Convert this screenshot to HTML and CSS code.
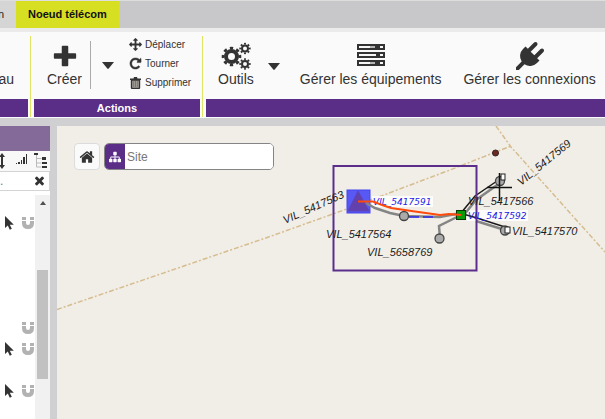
FILE: index.html
```html
<!DOCTYPE html>
<html lang="fr">
<head>
<meta charset="utf-8">
<meta name="viewport" content="width=device-width, initial-scale=1">
<title>Noeud télécom</title>
<link rel="stylesheet" href="styles.css">
</head>
<body>
<svg class="symbols" aria-hidden="true">
  <symbol id="pointer" viewBox="0 0 10 14"><path d="M1 0v12l2.800-2.600 2 4.300 2-1-2-4H9.800z"/></symbol>
  <symbol id="magnet" viewBox="0 0 12 12"><path d="M0 0h4v3H0zM8 0h4v3H8zM0 4h4v2q0 2 2 2t2-2V4h4v2q0 6-6 6T0 6z"/></symbol>
</svg>

<nav class="tabs">
  <button class="tab tab-clipped">n</button>
  <button class="tab tab-active">Noeud télécom</button>
</nav>

<header class="ribbon">
  <section class="group group-first">
    <div class="group-body"><button class="clipped">au</button></div>
    <div class="group-title"></div>
  </section>
  <section class="group group-actions">
    <div class="group-body">
      <button class="tool tool-create">
        <svg class="tool-icon" viewBox="0 0 28 28"><path d="M11.500 3h5a1 1 0 0 1 1 1v7H25a1 1 0 0 1 1 1v4a1 1 0 0 1-1 1h-7.500V24a1 1 0 0 1-1 1h-5a1 1 0 0 1-1-1v-7H3a1 1 0 0 1-1-1v-4a1 1 0 0 1 1-1h7.500V4a1 1 0 0 1 1-1z"/></svg>
        <span>Créer</span>
      </button>
      <button class="caret caret-split" aria-label="Plus"><svg viewBox="0 0 12 7"><path d="M0 0h12L6.700 6.600q-.7.600-1.400 0z"/></svg></button>
      <div class="mini-list">
        <button class="mini"><svg viewBox="0 0 1792 1792"><path d="M1792 896q0 26-19 45l-256 256q-19 19-45 19t-45-19-19-45v-128h-384v384h128q26 0 45 19t19 45-19 45l-256 256q-19 19-45 19t-45-19l-256-256q-19-19-19-45t19-45 45-19h128v-384h-384v128q0 26-19 45t-45 19-45-19l-256-256q-19-19-19-45t19-45l256-256q19-19 45-19t45 19 19 45v128h384v-384h-128q-26 0-45-19t-19-45 19-45l256-256q19-19 45-19t45 19l256 256q19 19 19 45t-19 45-45 19h-128v384h384v-128q0-26 19-45t45-19 45 19l256 256q19 19 19 45z"/></svg>Déplacer</button>
        <button class="mini"><svg viewBox="0 0 1792 1792"><path stroke="#333" stroke-width="60" d="M1664 256v448q0 26-19 45t-45 19h-448q-42 0-59-40-17-39 14-69l138-138q-148-137-349-137-104 0-198.500 40.500t-163.500 109.500-109.500 163.500-40.500 198.500 40.500 198.500 109.500 163.500 163.500 109.500 198.500 40.500q119 0 225-52t179-147q7-10 23-12 15 0 25 9l137 138q9 8 9.500 20.500t-7.500 22.500q-109 132-264 204.500t-327 72.500q-156 0-298-61t-245-164-164-245-61-298 61-298 164-245 245-164 298-61q147 0 284.500 55.500t244.500 156.500l130-129q29-31 70-14 39 17 39 59z"/></svg>Tourner</button>
        <button class="mini"><svg viewBox="0 0 13 13"><path d="M2.500 4h8v7.500q0 1-1 1h-6q-1 0-1-1z" fill="#a8a29c" stroke="#333" stroke-width="1.400"/><path d="M4.700 5v6M6.500 5v6M8.300 5v6" stroke="#555" stroke-width=".6"/><path d="M1 2.500h3.500L5 1h3l.5 1.500H12V4H1z"/></svg>Supprimer</button>
      </div>
    </div>
    <div class="group-title">Actions</div>
  </section>
  <section class="group group-tools">
    <div class="group-body">
      <button class="tool">
        <svg class="tool-icon tool-icon-wide" viewBox="0 0 30 28">
          <g class="gears">
            <circle cx="10.500" cy="14.500" r="5.500" stroke-width="4"/><circle cx="10.500" cy="14.500" r="8.500" stroke-width="2.600" pathLength="16" stroke-dasharray="1 1" stroke-dashoffset=".5"/>
            <circle cx="24" cy="6.500" r="3" stroke-width="2"/><circle cx="24" cy="6.500" r="4.800" stroke-width="1.800" pathLength="16" stroke-dasharray="1 1" stroke-dashoffset=".5"/>
            <circle cx="24" cy="22" r="3" stroke-width="2"/><circle cx="24" cy="22" r="4.800" stroke-width="1.800" pathLength="16" stroke-dasharray="1 1" stroke-dashoffset=".5"/>
          </g>
        </svg>
        <span>Outils</span>
      </button>
      <button class="caret" aria-label="Plus d’outils"><svg viewBox="0 0 12 7"><path d="M0 0h12L6.700 6.600q-.7.600-1.400 0z"/></svg></button>
      <button class="tool tool-equipment">
        <svg class="tool-icon" viewBox="0 0 28 28"><path d="M0 2h28v6H0zM0 10h28v6H0zM0 18h28v6H0z"/><path fill="#f6f6f6" d="M2 4h11v2H2zM2 12h17v2H2zM2 20h11v2H2zM23 4h3v2h-3zM23 12h3v2h-3zM23 20h3v2h-3z"/><path fill="#b5b5b5" d="M13 4h5v2h-5zM13 20h5v2h-5z"/></svg>
        <span>Gérer les équipements</span>
      </button>
      <button class="tool tool-plug">
        <svg class="tool-icon" viewBox="0 0 1792 1792"><path d="M1755 453q37 38 37 90.500t-37 90.500l-401 400 150 150-160 160q-163 163-389.500 186.500t-411.500-100.500l-362 362h-181v-181l362-362q-124-185-100.500-411.500t186.500-389.500l160-160 150 150 400-401q38-37 91-37t90 37 37 90.500-37 90.500l-400 401 234 234 401-400q38-37 91-37t90 37z"/></svg>
        <span>Gérer les connexions</span>
      </button>
    </div>
    <div class="group-title"></div>
  </section>
</header>

<main class="workspace">
  <aside class="panel">
    <div class="panel-head"></div>
    <div class="panel-tools">
      <svg viewBox="0 0 50 20" aria-hidden="true">
        <path d="M2 2l3 4H3v8h2l-3 4-3-4h2V6h-2z"/>
        <path d="M16 12h1v1h-1zM18 11h2v2h-2zM21 9h1v4h-1zM23 6h2v7h-2zM26 3h1v10h-1z"/>
        <path d="M34 2h4v2h-4zM42 6h4v3h-4zM42 11h5v2h-5zM42 15h5v2h-5z"/>
        <path d="M36.500 4v12M36.500 7.500h5M36.500 12h5M36.500 16h5" fill="none" stroke="#b9b9b9"/>
      </svg>
    </div>
    <div class="filter">
      <input class="filter-input" type="text" placeholder="." aria-label="Filtre">
      <button class="clear" aria-label="Effacer"><svg viewBox="302 302 1188 1188"><path d="M1490 1322q0 40-28 68l-136 136q-28 28-68 28t-68-28l-294-294-294 294q-28 28-68 28t-68-28l-136-136q-28-28-28-68t28-68l294-294-294-294q-28-28-28-68t28-68l136-136q28-28 68-28t68 28l294 294 294-294q28-28 68-28t68 28l136 136q28 28 28 68t-28 68l-294 294 294 294q28 28 28 68z" transform="translate(0 -132)"/></svg></button>
    </div>
    <div class="list-area">
      <ul class="layers">
        <li><svg class="pointer"><use href="#pointer"/></svg><svg class="magnet"><use href="#magnet"/></svg></li>
        <li></li><li></li><li></li><li></li>
        <li><svg class="magnet"><use href="#magnet"/></svg></li>
        <li><svg class="pointer"><use href="#pointer"/></svg><svg class="magnet"><use href="#magnet"/></svg></li>
        <li></li>
        <li><svg class="pointer"><use href="#pointer"/></svg><svg class="magnet"><use href="#magnet"/></svg></li>
      </ul>
      <div class="scrollbar">
        <svg class="scroll-up" viewBox="0 0 6 4"><path d="M3 0l3 4H0z"/></svg>
        <div class="thumb"></div>
      </div>
    </div>
  </aside>

  <section class="map">
    <svg class="map-canvas">
      <g transform="translate(-57 -126)">
        <g class="boundary">
          <path d="M57 309.500L270 236.500 344 210 450 170 511 146"/>
          <path d="M496 126L511 147 605 252"/>
        </g>
        <circle cx="495.500" cy="153" r="3" fill="#6e2a22" stroke="#33211e"/>
        <rect x="347" y="190" width="23" height="23" fill="#5858f4" stroke="#4444ee"/>
        <path d="M358 191l11 20h-21z" fill="#6440ac" stroke="#5a44c0"/>
        <rect class="label-back" x="372" y="196" width="61" height="11"/>
        <rect class="label-back" x="467" y="210" width="61" height="11"/>
        <g class="cable">
          <path d="M366 203L375 208 390 213 404 216 440 217 461 213"/>
          <path d="M461 215L439 226 440 238"/>
          <path d="M463 216L476 200 500 183"/>
          <path d="M476 221L505 230"/>
        </g>
        <path class="wire" d="M461 213L475 196 500 179M463 214L477 218 505 227"/>
        <path d="M409 217h27" fill="none" stroke="#2a2af0" stroke-width="1.500" stroke-dasharray="10 4"/>
        <g class="node"><circle cx="404" cy="216" r="4.500"/><circle cx="439.500" cy="238.500" r="4.500"/><circle cx="500" cy="181" r="4.500"/><circle cx="505" cy="230.500" r="4.500"/></g>
        <g class="port"><rect x="501" y="174" width="4" height="6"/><rect x="505" y="227" width="5" height="6"/></g>
        <path d="M487 187.500h25M499.500 173v28" stroke="#111" fill="none" stroke-width="1.500"/>
        <rect x="456.500" y="210.500" width="9" height="9" fill="#0a9b0a" stroke="#063806"/>
        <rect x="333.500" y="166" width="143" height="104.500" fill="none" stroke="#5b2e8c" stroke-width="2"/>
        <g class="label">
          <text transform="translate(285 224) rotate(-24)">VIL_5417563</text>
          <text transform="translate(521 186) rotate(-39)">VIL_5417569</text>
          <text x="326" y="238">VIL_5417564</text>
          <text x="367" y="256">VIL_5658769</text>
          <text x="468" y="205">VIL_5417566</text>
          <text x="512" y="235">VIL_5417570</text>
        </g>
        <g class="label-blue"><text x="373" y="205">VIL_5417591</text><text x="468" y="219">VIL_5417592</text></g>
        <path class="route" d="M358 201.500L373 201.500 382 205 391 208 415 211.500 440 215 449 214 461 215"/>
      </g>
    </svg>
    <div class="map-tools">
      <button class="home" aria-label="Accueil"><svg viewBox="0 0 1792 1792"><path d="M1472 992v480q0 26-19 45t-45 19h-384v-384h-256v384h-384q-26 0-45-19t-19-45v-480q0-1 .5-3t.5-3l575-474 575 474q1 2 1 6zm223-69l-62 74q-8 9-21 11h-3q-13 0-21-7l-692-577-692 577q-12 8-24 7-13-2-21-11l-62-74q-8-10-7-23.500t11-21.500l719-599q32-26 76-26t76 26l244 204v-195q0-14 9-23t23-9h192q14 0 23 9t9 23v408l219 182q10 8 11 21.500t-7 23.500z"/></svg></button>
      <div class="search">
        <label class="search-icon" for="site" aria-label="Site"><svg viewBox="0 0 1792 1792"><path d="M1792 1248v320q0 40-28 68t-68 28h-320q-40 0-68-28t-28-68v-320q0-40 28-68t68-28h96v-192h-512v192h96q40 0 68 28t28 68v320q0 40-28 68t-68 28h-320q-40 0-68-28t-28-68v-320q0-40 28-68t68-28h96v-192h-512v192h96q40 0 68 28t28 68v320q0 40-28 68t-68 28h-320q-40 0-68-28t-28-68v-320q0-40 28-68t68-28h96v-192q0-52 38-90t90-38h512v-192h-96q-40 0-68-28t-28-68v-320q0-40 28-68t68-28h320q40 0 68 28t28 68v320q0 40-28 68t-68 28h-96v192h512q52 0 90 38t38 90v192h96q40 0 68 28t28 68z"/></svg></label>
        <input id="site" class="search-input" type="text" placeholder="Site">
      </div>
    </div>
  </section>
</main>
</body>
</html>
```
FILE: styles.css
```css
* { box-sizing: border-box; }

body {
  margin: 0;
  height: 100vh;
  display: flex;
  flex-direction: column;
  overflow: hidden;
  background: #d0d0d3;
  color: #333;
  font-family: "Liberation Sans", Arial, sans-serif;
  font-size: 14px;
}

button {
  margin: 0;
  padding: 0;
  border: 0;
  background: none;
  color: inherit;
  font: inherit;
  white-space: nowrap;
}

svg { display: block; fill: #333; }
.symbols { width: 0; height: 0; position: absolute; }

.tabs {
  display: flex;
  height: 28px;
  flex: none;
  border-top: 1px solid #dededc;
  background: #c8c8ca;
}
.tab { padding-bottom: 2px; font-size: 11px; color: #222; }
.tab-clipped {
  width: 16px;
  padding-right: 12px;
  display: flex;
  align-items: center;
  justify-content: flex-end;
  background: #d5d5d6;
}
.tab-active {
  padding-left: 12px;
  padding-right: 12px;
  background: #d7df23;
  color: #111;
  font-weight: bold;
}

.ribbon {
  display: flex;
  flex: none;
  padding: 4px 0 1px;
  border-top: 4px solid #ebebeb;
  background: #fafafa;
}
.group { display: flex; flex-direction: column; }
.group + .group {
  margin-left: 2px;
  padding-left: 3px;
  border-left: 1px solid #dfe562;
}
.group-first { width: 28px; }
.group-actions { width: 170px; }
.group-tools { flex: 1; min-width: 0; }
.group-body { display: flex; height: 63px; }
.group-title {
  height: 18px;
  background: #5a2d87;
  color: #fff;
  font-size: 11px;
  font-weight: bold;
  line-height: 19px;
  text-align: center;
}
.clipped {
  width: 14px;
  display: flex;
  align-items: flex-end;
  justify-content: flex-end;
  padding-bottom: 12px;
}

.tool {
  display: flex;
  flex-direction: column;
  align-items: center;
  gap: 1px;
  padding: 6px 0 0;
  line-height: 16px;
}
.tool-icon { width: 28px; height: 28px; }
.tool-icon-wide { width: 30px; }
.gears { fill: none; stroke: #333; }
.tool-create { margin-left: 13px; }
.group-tools .tool:first-child { margin-left: 12px; }
.tool-create .tool-icon { width: 26px; }
.tool-equipment { margin-left: 20px; }
.tool-plug { margin-left: 22px; }
.caret {
  display: flex;
  align-items: center;
  padding: 0 0 2px 14px;
  height: 63px;
}
.caret svg { width: 12px; height: 7px; }
.caret-split {
  height: 48px;
  margin: 5px 0 0 8px;
  padding: 1px 0 0 11px;
  border-left: 1px solid #aaa;
}
.mini-list { display: flex; flex-direction: column; margin: -1px 0 0 15px; }
.mini {
  display: flex;
  align-items: center;
  gap: 3px;
  height: 19px;
  font-size: 10px;
}
.mini svg { width: 13px; height: 13px; }

.workspace { display: flex; flex: 1; min-height: 0; padding-top: 8px; gap: 7px; }

.panel { width: 50px; flex: none; display: flex; flex-direction: column; background: #fff; }
.panel-head { height: 25px; background: #846a99; }
.panel-tools { height: 20px; background: #f8f8f8; }
.panel-tools svg { width: 50px; height: 20px; }
.filter {
  display: flex;
  align-items: center;
  height: 20px;
  border: 1px solid #d4d4d4;
  border-left: 0;
}
.filter-input {
  flex: 1;
  min-width: 0;
  padding: 0;
  border: 0;
  font: 12px "Liberation Sans", Arial, sans-serif;
}
.clear { padding: 0 5px; }
.clear svg { width: 9px; height: 9px; overflow: visible; }
.list-area { display: flex; flex: 1; min-height: 0; margin-top: 4px; }
.layers { flex: 1; margin: 0; padding: 17px 1px 0 0; list-style: none; }
.layers li {
  display: flex;
  align-items: center;
  justify-content: flex-end;
  gap: 8px;
  height: 21px;
}
.pointer { width: 10px; height: 14px; }
.magnet { width: 12px; height: 12px; fill: #b2b2b2; }
.scrollbar { width: 15px; padding: 6px 2px 0; background: #f1f1f1; }
.scroll-up { width: 6px; height: 4px; margin: 0 auto 65px; fill: #505050; }
.thumb { height: 109px; background: #c1c1c1; }

.map { position: relative; flex: 1; min-width: 0; padding: 17px; background: #f1eee7; }
.map-canvas { position: absolute; inset: 0; width: 100%; height: 100%; }
.boundary { fill: none; stroke: #d6bd90; stroke-width: 1.5; stroke-dasharray: 5 2 2 2; }
.cable { fill: none; stroke: #858585; stroke-width: 2.5; }
.wire { fill: none; stroke: #1a1a1a; stroke-width: 1.5; }
.route { fill: none; stroke: #ff4a0c; stroke-width: 2; }
.node { fill: #aaa; stroke: #444; stroke-width: 1.3; }
.port { fill: #fff; stroke: #222; }
.label { font-size: 11px; font-style: italic; fill: #1c1c1c; }
.label-back { fill: #fff; opacity: .8; }
.label-blue { font: italic 9px "DejaVu Sans", sans-serif; fill: #2222e6; }

.map-tools { position: relative; display: flex; gap: 4px; height: 27px; }
.home {
  width: 26px;
  display: flex;
  align-items: center;
  justify-content: center;
  border: 1px solid #dcdcdc;
  border-radius: 4px;
  background: #fafafa;
}
.home svg { width: 16px; height: 16px; }
.search {
  display: flex;
  width: 170px;
  border: 1px solid #858585;
  border-radius: 5px;
  overflow: hidden;
  background: #fff;
}
.search-icon {
  width: 20px;
  display: flex;
  align-items: center;
  justify-content: center;
  background: #5a2d87;
}
.search-icon svg { width: 12px; height: 12px; fill: #fff; }
.search-input {
  flex: 1;
  min-width: 0;
  padding: 0 2px;
  border: 0;
  outline: 0;
  font: 12px "Liberation Sans", Arial, sans-serif;
}
.search-input::placeholder { color: #777; }
```
